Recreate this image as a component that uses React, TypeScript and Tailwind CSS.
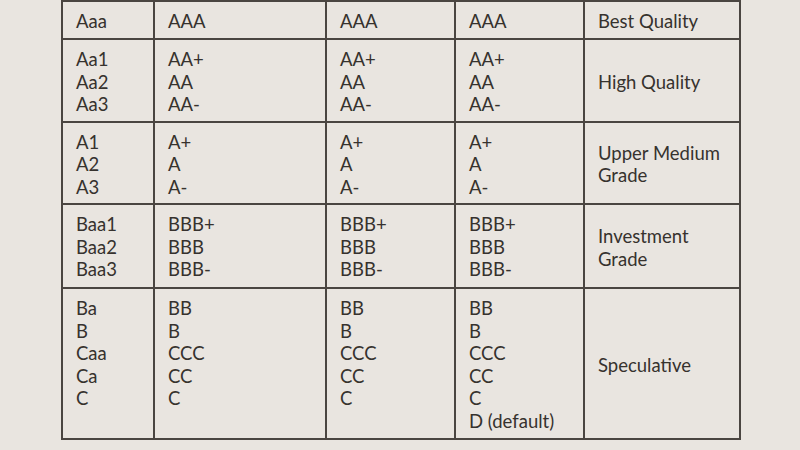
const rows = [
  {
    moodys: ["Aaa"],
    sp: ["AAA"],
    fitch: ["AAA"],
    dbrs: ["AAA"],
    label: "Best Quality",
    h: "h-[38px]",
  },
  {
    moodys: ["Aa1", "Aa2", "Aa3"],
    sp: ["AA+", "AA", "AA-"],
    fitch: ["AA+", "AA", "AA-"],
    dbrs: ["AA+", "AA", "AA-"],
    label: "High Quality",
    h: "h-[82px]",
  },
  {
    moodys: ["A1", "A2", "A3"],
    sp: ["A+", "A", "A-"],
    fitch: ["A+", "A", "A-"],
    dbrs: ["A+", "A", "A-"],
    label: "Upper Medium Grade",
    h: "h-[81px]",
  },
  {
    moodys: ["Baa1", "Baa2", "Baa3"],
    sp: ["BBB+", "BBB", "BBB-"],
    fitch: ["BBB+", "BBB", "BBB-"],
    dbrs: ["BBB+", "BBB", "BBB-"],
    label: "Investment Grade",
    h: "h-[84px]",
  },
  {
    moodys: ["Ba", "B", "Caa", "Ca", "C"],
    sp: ["BB", "B", "CCC", "CC", "C"],
    fitch: ["BB", "B", "CCC", "CC", "C"],
    dbrs: ["BB", "B", "CCC", "CC", "C", "D (default)"],
    label: "Speculative",
    h: "h-[151px]",
  },
]

function Lines({ items }: { items: string[] }) {
  return (
    <td className="border-2 border-[#4a4541] align-top pl-[13px] pt-[8px] pb-[5px]">
      {items.map((t) => (
        <div key={t}>{t}</div>
      ))}
    </td>
  )
}

export default function App() {
  return (
    <div
      className="w-[800px] h-[450px] overflow-hidden bg-[#e9e5e0] pl-[61px] text-[#36322e] text-[18.5px] leading-[22.5px]"
      style={{ fontFamily: "Lato, 'Open Sans', sans-serif" }}
    >
      <table className="table-fixed border-collapse w-[678px]">
        <colgroup>
          <col className="w-[92px]" />
          <col className="w-[172px]" />
          <col className="w-[129px]" />
          <col className="w-[129px]" />
          <col className="w-[156px]" />
        </colgroup>
        <tbody>
          {rows.map((r) => (
            <tr key={r.label} className={r.h}>
              <Lines items={r.moodys} />
              <Lines items={r.sp} />
              <Lines items={r.fitch} />
              <Lines items={r.dbrs} />
              <td className="border-2 border-[#4a4541] align-middle pl-[13px] pr-1 pt-[8px] pb-[5px]">
                {r.label}
              </td>
            </tr>
          ))}
        </tbody>
      </table>
    </div>
  )
}
